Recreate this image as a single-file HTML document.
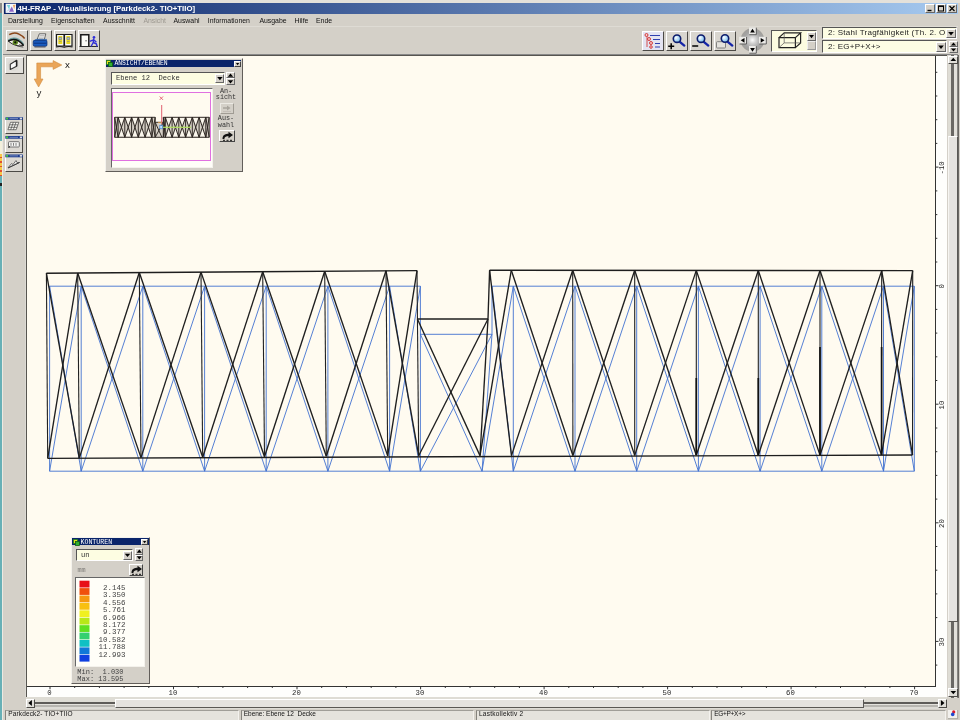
<!DOCTYPE html>
<html><head><meta charset="utf-8">
<style>
html,body{margin:0;padding:0;}
body{width:960px;height:720px;overflow:hidden;background:#d4d0c8;position:relative;font-family:"Liberation Sans",sans-serif;font-size:7px;color:#111;}
.a{position:absolute;}
.mono{font-family:"Liberation Mono",monospace;}
.raised{border:1px solid;border-color:#fff #555 #555 #fff;background:#d4d0c8;box-sizing:border-box;}
.sunken{border:1px solid;border-color:#666 #fff #fff #666;box-sizing:border-box;}
.bl{stroke:#4272d0;stroke-width:0.900;fill:none;}
.bk{stroke:#1e1e1e;stroke-width:1.350;fill:none;}
.bk2{stroke:#111;stroke-width:1.700;fill:none;}
.bkv{stroke:#222;stroke-width:1.100;fill:none;}
.blv{stroke:#4272d0;stroke-width:0.900;fill:none;}
.rl{stroke:#333;stroke-width:1;}
.rt{font-family:"Liberation Mono",monospace;font-size:7.3px;fill:#2a2a2a;}
.menu span{position:absolute;top:0;white-space:nowrap;}
.tb{position:absolute;box-sizing:border-box;border:1px solid;border-color:#fff #666 #666 #fff;background:#d4d0c8;}
.tb2{position:absolute;box-sizing:border-box;border-style:solid;border-width:1px 1.500px 1.500px 1px;border-color:#fff #4c4a46 #4c4a46 #fff;background:#d9d6cf;}
.st{position:absolute;top:709.500px;height:10.500px;box-sizing:border-box;border-style:solid;border-width:1.500px 1px 0 1px;border-color:#a09e98 #f4f2ee #e2e0da #85837d;background:#e5e3dd;font-size:6.5px;line-height:6.200px;padding-left:2px;white-space:nowrap;overflow:hidden;color:#111;}
</style></head><body><div id="wrap" style="position:absolute;left:0;top:0;width:960px;height:720px;will-change:transform">
<!-- desktop strip -->
<div class="a" style="left:0;top:0;width:2px;height:720px;background:#68b0b6"></div>
<div class="a" style="left:2px;top:0;width:1px;height:720px;background:#ece9e2"></div>
<div class="a" style="left:0;top:0;width:2px;height:13px;background:#8c8c8a"></div>
<div class="a" style="left:0;top:0;width:960px;height:2.500px;background:#e4e1da"></div>
<div class="a" style="left:0;top:141px;width:2px;height:13.300px;background:#f4f0dc"></div>
<div class="a" style="left:0;top:154.300px;width:2px;height:21.300px;background:repeating-linear-gradient(180deg,#f6c848 0,#f6c848 3px,#e05030 3px,#e05030 4.500px)"></div>
<div class="a" style="left:0;top:183px;width:2px;height:3px;background:#222"></div>
<!-- title bar -->
<div class="a" style="left:4px;top:2.500px;width:954px;height:11.200px;background:linear-gradient(90deg,#0a246a 0%,#a6caf0 100%)"></div>
<div id="ttl" class="a" style="left:17.500px;top:3px;height:11px;line-height:11px;font-weight:bold;color:#fff;font-size:7.8px;white-space:nowrap">4H-FRAP - Visualisierung [Parkdeck2- TIO+TIIO]</div>
<svg class="a" style="left:0;top:0" width="20" height="16"><rect x="5.600" y="3.700" width="10.400" height="9.200" fill="#f4f6fa"/><path d="M6.800 5L10 5L9.300 9.800Z" fill="#78d4dc"/><path d="M9 11.800L11.800 6.500L14 11.800Z" fill="#8c64c8"/><path d="M12.800 5L15.500 4.800L14.200 9.300Z" fill="#f0a868"/><path d="M7 11.500l3-3" stroke="#a0c8e8" stroke-width="1"/></svg>
<!-- window buttons -->
<div class="tb" style="left:925px;top:4px;width:10px;height:9px"></div>
<div class="tb" style="left:936px;top:4px;width:10px;height:9px"></div>
<div class="tb" style="left:947px;top:4px;width:10px;height:9px"></div>
<svg class="a" style="left:925px;top:4px" width="32" height="9"><path d="M2.5 6.5h4" stroke="#000" stroke-width="1.4"/><rect x="13.5" y="2" width="5" height="5" fill="none" stroke="#000" stroke-width="1"/><path d="M13 2.3h6" stroke="#000" stroke-width="1.2"/><path d="M24.5 2l5 5M29.5 2l-5 5" stroke="#000" stroke-width="1.2"/></svg>
<!-- menu -->
<div class="a menu" style="left:0;top:15px;width:960px;height:11px;line-height:11px;font-size:6.900px;color:#111">
<span style="left:7.900px">Darstellung</span><span style="left:51px">Eigenschaften</span><span style="left:103.100px">Ausschnitt</span><span style="left:143.400px;color:#9c9890">Ansicht</span><span style="left:173.500px">Auswahl</span><span style="left:207.800px">Informationen</span><span style="left:259.400px">Ausgabe</span><span style="left:294.600px">Hilfe</span><span style="left:316px">Ende</span>
</div>
<!-- canvas -->
<div class="a" style="left:24.500px;top:56px;width:1.500px;height:641px;background:#dcdad4"></div>
<div class="a" style="left:25.800px;top:54.800px;width:921.700px;height:642.200px;background:#fefefc;border-left:1.300px solid #575550;border-top:1.300px solid #575550;box-sizing:border-box"></div>
<div class="a" style="left:27px;top:56px;width:909px;height:630px;background:#fffbf0"></div>
<svg class="a" style="left:0;top:0" width="960" height="720">
<path d="M27 686.5H936M935.5 56V687" class="rl" fill="none"/>
<line x1="49.6" y1="286.2" x2="420.4" y2="286.2" class="bl"/>
<line x1="49.6" y1="471.2" x2="914.3" y2="471.2" class="bl"/>
<line x1="49.6" y1="286.2" x2="49.6" y2="471.2" class="blv"/>
<line x1="81.2" y1="286.2" x2="81.2" y2="471.2" class="blv"/>
<line x1="142.8" y1="286.2" x2="142.8" y2="471.2" class="blv"/>
<line x1="204.6" y1="286.2" x2="204.6" y2="471.2" class="blv"/>
<line x1="266.2" y1="286.2" x2="266.2" y2="471.2" class="blv"/>
<line x1="327.9" y1="286.2" x2="327.9" y2="471.2" class="blv"/>
<line x1="389.6" y1="286.2" x2="389.6" y2="471.2" class="blv"/>
<line x1="420.4" y1="286.2" x2="420.4" y2="471.2" class="blv"/>
<line x1="49.6" y1="286.2" x2="81.2" y2="471.2" class="bl"/>
<line x1="81.2" y1="286.2" x2="49.6" y2="471.2" class="bl"/>
<line x1="81.2" y1="286.2" x2="142.8" y2="471.2" class="bl"/>
<line x1="142.8" y1="286.2" x2="81.2" y2="471.2" class="bl"/>
<line x1="142.8" y1="286.2" x2="204.6" y2="471.2" class="bl"/>
<line x1="204.6" y1="286.2" x2="142.8" y2="471.2" class="bl"/>
<line x1="204.6" y1="286.2" x2="266.2" y2="471.2" class="bl"/>
<line x1="266.2" y1="286.2" x2="204.6" y2="471.2" class="bl"/>
<line x1="266.2" y1="286.2" x2="327.9" y2="471.2" class="bl"/>
<line x1="327.9" y1="286.2" x2="266.2" y2="471.2" class="bl"/>
<line x1="327.9" y1="286.2" x2="389.6" y2="471.2" class="bl"/>
<line x1="389.6" y1="286.2" x2="327.9" y2="471.2" class="bl"/>
<line x1="389.6" y1="286.2" x2="420.4" y2="471.2" class="bl"/>
<line x1="420.4" y1="286.2" x2="389.6" y2="471.2" class="bl"/>
<line x1="420.4" y1="334.3" x2="492.0" y2="334.3" class="bl"/>
<line x1="420.4" y1="334.3" x2="482.0" y2="471.2" class="bl"/>
<line x1="492.0" y1="334.3" x2="420.4" y2="471.2" class="bl"/>
<line x1="492.0" y1="334.3" x2="482.0" y2="471.2" class="bl"/>
<line x1="492.0" y1="286.2" x2="914.3" y2="286.2" class="bl"/>
<line x1="492.0" y1="286.2" x2="492.0" y2="334.3" class="bl"/>
<line x1="513.3" y1="286.2" x2="513.3" y2="471.2" class="blv"/>
<line x1="575.0" y1="286.2" x2="575.0" y2="471.2" class="blv"/>
<line x1="636.7" y1="286.2" x2="636.7" y2="471.2" class="blv"/>
<line x1="698.4" y1="286.2" x2="698.4" y2="471.2" class="blv"/>
<line x1="760.1" y1="286.2" x2="760.1" y2="471.2" class="blv"/>
<line x1="821.8" y1="286.2" x2="821.8" y2="471.2" class="blv"/>
<line x1="883.5" y1="286.2" x2="883.5" y2="471.2" class="blv"/>
<line x1="914.3" y1="286.2" x2="914.3" y2="471.2" class="blv"/>
<line x1="492.0" y1="286.2" x2="513.3" y2="471.2" class="bl"/>
<line x1="513.3" y1="286.2" x2="482.0" y2="471.2" class="bl"/>
<line x1="513.3" y1="286.2" x2="575.0" y2="471.2" class="bl"/>
<line x1="575.0" y1="286.2" x2="513.3" y2="471.2" class="bl"/>
<line x1="575.0" y1="286.2" x2="636.7" y2="471.2" class="bl"/>
<line x1="636.7" y1="286.2" x2="575.0" y2="471.2" class="bl"/>
<line x1="636.7" y1="286.2" x2="698.4" y2="471.2" class="bl"/>
<line x1="698.4" y1="286.2" x2="636.7" y2="471.2" class="bl"/>
<line x1="698.4" y1="286.2" x2="760.1" y2="471.2" class="bl"/>
<line x1="760.1" y1="286.2" x2="698.4" y2="471.2" class="bl"/>
<line x1="760.1" y1="286.2" x2="821.8" y2="471.2" class="bl"/>
<line x1="821.8" y1="286.2" x2="760.1" y2="471.2" class="bl"/>
<line x1="821.8" y1="286.2" x2="883.5" y2="471.2" class="bl"/>
<line x1="883.5" y1="286.2" x2="821.8" y2="471.2" class="bl"/>
<line x1="883.5" y1="286.2" x2="914.3" y2="471.2" class="bl"/>
<line x1="914.3" y1="286.2" x2="883.5" y2="471.2" class="bl"/>
<line x1="46.4" y1="273.2" x2="417.0" y2="270.6" class="bk"/>
<line x1="47.7" y1="458.3" x2="912.5" y2="455.0" class="bk"/>
<line x1="46.4" y1="273.2" x2="47.7" y2="458.3" class="bkv"/>
<line x1="77.7" y1="273.0" x2="79.3" y2="458.1" class="bkv"/>
<line x1="139.3" y1="272.5" x2="141.0" y2="457.6" class="bkv"/>
<line x1="201.0" y1="272.1" x2="202.7" y2="457.2" class="bkv"/>
<line x1="262.7" y1="271.7" x2="264.5" y2="456.8" class="bkv"/>
<line x1="324.7" y1="271.2" x2="326.3" y2="456.3" class="bkv"/>
<line x1="386.0" y1="270.8" x2="387.7" y2="455.9" class="bkv"/>
<line x1="417.0" y1="270.6" x2="418.7" y2="455.7" class="bkv"/>
<line x1="46.4" y1="273.2" x2="79.3" y2="458.1" class="bk"/>
<line x1="77.7" y1="273.0" x2="47.7" y2="458.3" class="bk"/>
<line x1="77.7" y1="273.0" x2="141.0" y2="457.6" class="bk"/>
<line x1="139.3" y1="272.5" x2="79.3" y2="458.1" class="bk"/>
<line x1="139.3" y1="272.5" x2="202.7" y2="457.2" class="bk"/>
<line x1="201.0" y1="272.1" x2="141.0" y2="457.6" class="bk"/>
<line x1="201.0" y1="272.1" x2="264.5" y2="456.8" class="bk"/>
<line x1="262.7" y1="271.7" x2="202.7" y2="457.2" class="bk"/>
<line x1="262.7" y1="271.7" x2="326.3" y2="456.3" class="bk"/>
<line x1="324.7" y1="271.2" x2="264.5" y2="456.8" class="bk"/>
<line x1="324.7" y1="271.2" x2="387.7" y2="455.9" class="bk"/>
<line x1="386.0" y1="270.8" x2="326.3" y2="456.3" class="bk"/>
<line x1="386.0" y1="270.8" x2="418.7" y2="455.7" class="bk"/>
<line x1="417.0" y1="270.6" x2="387.7" y2="455.9" class="bk"/>
<line x1="417.4" y1="319.0" x2="488.0" y2="319.0" class="bk"/>
<line x1="417.4" y1="319.0" x2="480.0" y2="455.6" class="bk"/>
<line x1="488.0" y1="319.0" x2="418.7" y2="455.7" class="bk"/>
<line x1="488.0" y1="319.0" x2="480.0" y2="455.6" class="bk"/>
<line x1="489.6" y1="270.2" x2="912.7" y2="270.6" class="bk"/>
<line x1="489.6" y1="270.2" x2="488.0" y2="319.0" class="bk"/>
<line x1="572.7" y1="270.3" x2="572.9" y2="455.5" class="bkv"/>
<line x1="634.7" y1="270.3" x2="634.7" y2="455.4" class="bkv"/>
<line x1="696.3" y1="270.4" x2="696.3" y2="455.3" class="bkv"/>
<line x1="758.3" y1="270.5" x2="758.3" y2="455.2" class="bkv"/>
<line x1="820.0" y1="270.5" x2="820.0" y2="455.1" class="bkv"/>
<line x1="881.7" y1="270.6" x2="881.5" y2="455.0" class="bkv"/>
<line x1="912.7" y1="270.6" x2="912.5" y2="455.0" class="bkv"/>
<line x1="489.6" y1="270.2" x2="511.5" y2="455.6" class="bk"/>
<line x1="511.3" y1="270.2" x2="480.0" y2="455.6" class="bk"/>
<line x1="511.3" y1="270.2" x2="572.9" y2="455.5" class="bk"/>
<line x1="572.7" y1="270.3" x2="511.5" y2="455.6" class="bk"/>
<line x1="572.7" y1="270.3" x2="634.7" y2="455.4" class="bk"/>
<line x1="634.7" y1="270.3" x2="572.9" y2="455.5" class="bk"/>
<line x1="634.7" y1="270.3" x2="696.3" y2="455.3" class="bk"/>
<line x1="696.3" y1="270.4" x2="634.7" y2="455.4" class="bk"/>
<line x1="696.3" y1="270.4" x2="758.3" y2="455.2" class="bk"/>
<line x1="758.3" y1="270.5" x2="696.3" y2="455.3" class="bk"/>
<line x1="758.3" y1="270.5" x2="820.0" y2="455.1" class="bk"/>
<line x1="820.0" y1="270.5" x2="758.3" y2="455.2" class="bk"/>
<line x1="820.0" y1="270.5" x2="881.5" y2="455.0" class="bk"/>
<line x1="881.7" y1="270.6" x2="820.0" y2="455.1" class="bk"/>
<line x1="881.7" y1="270.6" x2="912.5" y2="455.0" class="bk"/>
<line x1="912.7" y1="270.6" x2="881.5" y2="455.0" class="bk"/>
<line x1="820.0" y1="347.0" x2="820.0" y2="455.0" class="bk2"/>
<line x1="881.6" y1="347.0" x2="881.6" y2="455.0" class="bk2"/>
<line x1="696.3" y1="378.0" x2="696.3" y2="455.0" class="bk2"/>
<line x1="758.3" y1="378.0" x2="758.3" y2="455.0" class="bk2"/>
<line x1="50.0" y1="686.0" x2="50.0" y2="689.3" class="rl"/>
<line x1="74.7" y1="686.0" x2="74.7" y2="688.0" class="rl"/>
<line x1="99.4" y1="686.0" x2="99.4" y2="688.0" class="rl"/>
<line x1="124.1" y1="686.0" x2="124.1" y2="688.0" class="rl"/>
<line x1="148.8" y1="686.0" x2="148.8" y2="688.0" class="rl"/>
<line x1="173.5" y1="686.0" x2="173.5" y2="689.3" class="rl"/>
<line x1="198.2" y1="686.0" x2="198.2" y2="688.0" class="rl"/>
<line x1="222.9" y1="686.0" x2="222.9" y2="688.0" class="rl"/>
<line x1="247.6" y1="686.0" x2="247.6" y2="688.0" class="rl"/>
<line x1="272.3" y1="686.0" x2="272.3" y2="688.0" class="rl"/>
<line x1="297.0" y1="686.0" x2="297.0" y2="689.3" class="rl"/>
<line x1="321.7" y1="686.0" x2="321.7" y2="688.0" class="rl"/>
<line x1="346.4" y1="686.0" x2="346.4" y2="688.0" class="rl"/>
<line x1="371.2" y1="686.0" x2="371.2" y2="688.0" class="rl"/>
<line x1="395.9" y1="686.0" x2="395.9" y2="688.0" class="rl"/>
<line x1="420.6" y1="686.0" x2="420.6" y2="689.3" class="rl"/>
<line x1="445.3" y1="686.0" x2="445.3" y2="688.0" class="rl"/>
<line x1="470.0" y1="686.0" x2="470.0" y2="688.0" class="rl"/>
<line x1="494.7" y1="686.0" x2="494.7" y2="688.0" class="rl"/>
<line x1="519.4" y1="686.0" x2="519.4" y2="688.0" class="rl"/>
<line x1="544.1" y1="686.0" x2="544.1" y2="689.3" class="rl"/>
<line x1="568.8" y1="686.0" x2="568.8" y2="688.0" class="rl"/>
<line x1="593.5" y1="686.0" x2="593.5" y2="688.0" class="rl"/>
<line x1="618.2" y1="686.0" x2="618.2" y2="688.0" class="rl"/>
<line x1="642.9" y1="686.0" x2="642.9" y2="688.0" class="rl"/>
<line x1="667.6" y1="686.0" x2="667.6" y2="689.3" class="rl"/>
<line x1="692.3" y1="686.0" x2="692.3" y2="688.0" class="rl"/>
<line x1="717.0" y1="686.0" x2="717.0" y2="688.0" class="rl"/>
<line x1="741.7" y1="686.0" x2="741.7" y2="688.0" class="rl"/>
<line x1="766.4" y1="686.0" x2="766.4" y2="688.0" class="rl"/>
<line x1="791.1" y1="686.0" x2="791.1" y2="689.3" class="rl"/>
<line x1="815.8" y1="686.0" x2="815.8" y2="688.0" class="rl"/>
<line x1="840.5" y1="686.0" x2="840.5" y2="688.0" class="rl"/>
<line x1="865.2" y1="686.0" x2="865.2" y2="688.0" class="rl"/>
<line x1="889.9" y1="686.0" x2="889.9" y2="688.0" class="rl"/>
<line x1="914.6" y1="686.0" x2="914.6" y2="689.3" class="rl"/>
<line x1="935.5" y1="72.3" x2="937.3" y2="72.3" class="rl"/>
<line x1="935.5" y1="96.0" x2="937.3" y2="96.0" class="rl"/>
<line x1="935.5" y1="119.7" x2="937.3" y2="119.7" class="rl"/>
<line x1="935.5" y1="143.4" x2="937.3" y2="143.4" class="rl"/>
<line x1="935.5" y1="167.1" x2="938.5" y2="167.1" class="rl"/>
<line x1="935.5" y1="190.9" x2="937.3" y2="190.9" class="rl"/>
<line x1="935.5" y1="214.6" x2="937.3" y2="214.6" class="rl"/>
<line x1="935.5" y1="238.3" x2="937.3" y2="238.3" class="rl"/>
<line x1="935.5" y1="262.0" x2="937.3" y2="262.0" class="rl"/>
<line x1="935.5" y1="285.7" x2="938.5" y2="285.7" class="rl"/>
<line x1="935.5" y1="309.4" x2="937.3" y2="309.4" class="rl"/>
<line x1="935.5" y1="333.1" x2="937.3" y2="333.1" class="rl"/>
<line x1="935.5" y1="356.8" x2="937.3" y2="356.8" class="rl"/>
<line x1="935.5" y1="380.5" x2="937.3" y2="380.5" class="rl"/>
<line x1="935.5" y1="404.2" x2="938.5" y2="404.2" class="rl"/>
<line x1="935.5" y1="428.0" x2="937.3" y2="428.0" class="rl"/>
<line x1="935.5" y1="451.7" x2="937.3" y2="451.7" class="rl"/>
<line x1="935.5" y1="475.4" x2="937.3" y2="475.4" class="rl"/>
<line x1="935.5" y1="499.1" x2="937.3" y2="499.1" class="rl"/>
<line x1="935.5" y1="522.8" x2="938.5" y2="522.8" class="rl"/>
<line x1="935.5" y1="546.5" x2="937.3" y2="546.5" class="rl"/>
<line x1="935.5" y1="570.2" x2="937.3" y2="570.2" class="rl"/>
<line x1="935.5" y1="593.9" x2="937.3" y2="593.9" class="rl"/>
<line x1="935.5" y1="617.6" x2="937.3" y2="617.6" class="rl"/>
<line x1="935.5" y1="641.4" x2="938.5" y2="641.4" class="rl"/>
<line x1="935.5" y1="665.1" x2="937.3" y2="665.1" class="rl"/>
<text x="49.4" y="694.9" class="rt" text-anchor="middle">0</text><text x="172.9" y="694.9" class="rt" text-anchor="middle">10</text><text x="296.4" y="694.9" class="rt" text-anchor="middle">20</text><text x="420.0" y="694.9" class="rt" text-anchor="middle">30</text><text x="543.5" y="694.9" class="rt" text-anchor="middle">40</text><text x="667.0" y="694.9" class="rt" text-anchor="middle">50</text><text x="790.5" y="694.9" class="rt" text-anchor="middle">60</text><text x="914.0" y="694.9" class="rt" text-anchor="middle">70</text>
<text transform="translate(944.2,167.9) rotate(-90)" class="rt" text-anchor="middle">-10</text><text transform="translate(944.2,286.4) rotate(-90)" class="rt" text-anchor="middle">0</text><text transform="translate(944.2,405.0) rotate(-90)" class="rt" text-anchor="middle">10</text><text transform="translate(944.2,523.5) rotate(-90)" class="rt" text-anchor="middle">20</text><text transform="translate(944.2,642.1) rotate(-90)" class="rt" text-anchor="middle">30</text>
</svg>
<!-- toolbar separators -->
<div class="a" style="left:3px;top:26px;width:955px;height:1px;background:#dedbd4"></div>
<div class="a" style="left:3px;top:54px;width:955px;height:1px;background:#888"></div>
<!-- left toolbar buttons -->
<div class="tb2" style="left:5.500px;top:30px;width:22px;height:21px"></div>
<div class="tb2" style="left:29.500px;top:30px;width:22px;height:21px"></div>
<div class="tb2" style="left:53.500px;top:30px;width:22px;height:21px"></div>
<div class="tb2" style="left:77.500px;top:30px;width:22px;height:21px"></div>
<svg class="a" style="left:0;top:0" width="110" height="56">
 <!-- eye -->
 <path d="M9.200 34.600 Q14.500 31.500 19 34.200 Q22.500 36 24.600 38.400" stroke="#8a4618" stroke-width="1.500" fill="none"/>
 <path d="M8.300 40.500 Q13 36.800 18.500 39.500 Q21.500 41 23.500 44.500" stroke="#6a9c9c" stroke-width="1.600" fill="none"/>
 <path d="M8.300 41.200 Q13 38.200 18.500 40.800 Q21.500 42.500 23.500 45.500 Q16 47.500 8.300 41.200Z" fill="#f0eee6" stroke="#1a1a1a" stroke-width="0.900"/>
 <circle cx="15.300" cy="42.300" r="2.600" fill="#5c8420"/><circle cx="15.300" cy="42.300" r="1.100" fill="#0c1404"/>
 <path d="M8.300 41.200 Q13 38.200 18.500 40.800 Q21.500 42.500 23.500 45.500" stroke="#111" stroke-width="1.500" fill="none"/>
 <path d="M17 45.800 Q20.500 46.800 23.300 47.200M19 44.600L22.500 46" stroke="#333" stroke-width="0.700" fill="none"/>
 <!-- printer -->
 <path d="M37 39.800 L39.300 33.800 L45.800 33.800 L44.200 39.800Z" fill="#f4f4f4" stroke="#333" stroke-width="0.700"/>
 <path d="M39.500 35.500h5M39 37h5M38.500 38.400h5" stroke="#888" stroke-width="0.500"/>
 <path d="M33.300 41 L36 39.300 L46.500 39.300 L46.800 41Z" fill="#4a8ae0" stroke="#123c80" stroke-width="0.500"/>
 <rect x="33.200" y="40.600" width="13.800" height="5.600" rx="1.300" fill="#1a5cc0" stroke="#0c2c70" stroke-width="0.700"/>
 <path d="M33.800 43.200h12.600" stroke="#0c2c78" stroke-width="0.900"/>
 <path d="M34.500 47h11" stroke="#334" stroke-width="0.800"/>
 <!-- book -->
 <path d="M56.500 34.500h7.500v11.500h-7.500zM64.500 34.500h7.500v11.500h-7.500z" fill="#fbfbf4" stroke="#1a1a1a" stroke-width="1.200"/>
 <rect x="58.300" y="36" width="4" height="8" fill="#e8d820"/><rect x="66.300" y="36" width="4" height="8" fill="#e8d820"/>
 <path d="M59 37.500h2.500v2h-2.500zM67 37.500h2.500v2h-2.500zM59 41.500h2.500M67 41.500h2.500" fill="#a8b8d0" stroke="#6878a0" stroke-width="0.500"/>
 <path d="M56 47 Q60 46 64.200 47.300 Q68.500 46 72.500 47" stroke="#1a1a1a" stroke-width="1.100" fill="none"/>
 <!-- exit -->
 <path d="M80.800 46.300V34.800H88.800V46.300" fill="#fbfbf6" stroke="#1a1a1a" stroke-width="1.500"/>
 <path d="M79.500 46.500H98" stroke="#1a1a1a" stroke-width="0.900"/>
 <path d="M85.300 40.800h1.500" stroke="#333" stroke-width="0.800"/>
 <circle cx="94" cy="37.300" r="1.300" fill="#3030d8"/>
 <path d="M93.800 38.800L93.200 42.500M93.600 39.800L90.300 41.200M93.600 39.800L96 41.800M93.200 42.500L91.300 46M93.200 42.500L96.300 43.800L97 46" stroke="#3030d8" stroke-width="1.400" fill="none" stroke-linecap="round"/>
</svg>
<!-- right toolbar -->
<div class="tb2" style="left:642px;top:30.500px;width:21.500px;height:20.500px;background:#e4e4f2"></div>
<div class="tb2" style="left:666px;top:30.500px;width:21.500px;height:20.500px"></div>
<div class="tb2" style="left:690px;top:30.500px;width:21.500px;height:20.500px"></div>
<div class="tb2" style="left:714px;top:30.500px;width:21.500px;height:20.500px"></div>
<svg class="a" style="left:642px;top:30px" width="96" height="21">
 <!-- list icon -->
 <path d="M5 4 V17" stroke="#d04040" stroke-width="0.9"/>
 <g fill="#f8d0d0" stroke="#d03030" stroke-width="0.9"><circle cx="4.5" cy="5" r="1.5"/><circle cx="7" cy="9" r="1.5"/><circle cx="9" cy="13" r="1.5"/><circle cx="9" cy="17" r="1.3"/></g>
 <g stroke="#3040b0" stroke-width="1"><path d="M8 5.5h10M11 9.5h7M13 13.5h5M13 17h5"/></g>
 <!-- zoom + -->
 <defs><radialGradient id="lg" cx="0.35" cy="0.35" r="0.7"><stop offset="0" stop-color="#fff"/><stop offset="0.5" stop-color="#b4dcf8"/><stop offset="1" stop-color="#78b8e8"/></radialGradient></defs>
 <g><path d="M37.500 11.700 L42.300 15.600" stroke="#1424a8" stroke-width="2.300" stroke-linecap="round"/><circle cx="35" cy="8.700" r="3.700" fill="url(#lg)" stroke="#0c1c6c" stroke-width="1.600"/></g>
 <path d="M26.200 16.200h6M29.200 13.200v6" stroke="#000" stroke-width="1.500"/>
 <!-- zoom - -->
 <g transform="translate(24,0)"><path d="M37.500 11.700 L42.300 15.600" stroke="#1424a8" stroke-width="2.300" stroke-linecap="round"/><circle cx="35" cy="8.700" r="3.700" fill="url(#lg)" stroke="#0c1c6c" stroke-width="1.600"/><path d="M26.200 16h6" stroke="#000" stroke-width="1.500"/></g>
 <!-- zoom box -->
 <g transform="translate(48,0)"><rect x="26.500" y="11.700" width="9" height="6.300" rx="0.800" fill="#e4e2dc" stroke="#777" stroke-width="0.900"/><path d="M37.500 11.700 L42.300 15.600" stroke="#1424a8" stroke-width="2.300" stroke-linecap="round"/><circle cx="35" cy="8.500" r="3.700" fill="url(#lg)" stroke="#0c1c6c" stroke-width="1.600"/></g>
</svg>
<!-- nav pad -->
<svg class="a" style="left:737.250px;top:25.250px" width="32" height="30">
 <defs><radialGradient id="rg"><stop offset="0" stop-color="#fcfcfc"/><stop offset="0.300" stop-color="#d0d0d0"/><stop offset="0.700" stop-color="#a4a4a4"/><stop offset="1" stop-color="#a09e9a"/></radialGradient></defs>
 <circle cx="15.500" cy="15" r="11.800" fill="url(#rg)"/>
 <g fill="#ecebe8"><rect x="12" y="2.500" width="7" height="7"/><rect x="12" y="21" width="7" height="7"/><rect x="2.200" y="11.800" width="7" height="7"/><rect x="22" y="11.800" width="7" height="7"/></g>
 <g fill="none" stroke="#555" stroke-width="0.900"><path d="M12.300 9.700h7v-7M12.300 28.200h7v-7M2.500 19h7v-7M22.300 19h7v-7"/></g>
 <path d="M15.500 3.800l2.400 3.800h-4.800zM15.500 26.700l2.400-3.800h-4.800zM3.700 15.300l3.800-2.400v4.800zM27.500 15.300l-3.800-2.400v4.800z" fill="#000"/>
</svg>
<!-- 3d box combo -->
<div class="a sunken" style="left:771px;top:30px;width:46px;height:22px;background:#fcfce0;border-color:#555 #fff #fff #555"></div>
<svg class="a" style="left:0;top:0" width="820" height="56"><g fill="none" stroke="#222" stroke-width="1.200"><path d="M779 37.600h16.400v10h-16.400z"/><path d="M779 37.600l5.200-4.700h16.400l-5.200 4.700M795.400 47.600l5.200-4.700v-10"/></g><path d="M779 47.600l5.200-4.700h16.400M784.200 32.900v10" stroke="#555" stroke-width="0.700" fill="none"/></svg>
<div class="tb" style="left:807px;top:32px;width:9px;height:9px"></div>
<div class="a" style="left:807px;top:41px;width:9px;height:9px;background:#d4d0c8;border:1px solid;border-color:#eee #999 #999 #eee;box-sizing:border-box"></div>
<svg class="a" style="left:807px;top:32px" width="9" height="9"><path d="M2 3h5l-2.5 3.2z" fill="#000"/></svg>
<!-- combos right -->
<div class="a sunken" style="left:822px;top:27px;width:135px;height:12px;background:#fdfde4;border-color:#555 #fff #fff #555"></div>
<div class="a" style="left:828px;top:28px;height:10px;line-height:10px;font-size:8px;letter-spacing:0.27px;white-space:nowrap;color:#222">2: Stahl Tragfähigkeit (Th. 2. O</div>
<div class="tb" style="left:946px;top:29px;width:10px;height:9px"></div>
<svg class="a" style="left:946px;top:29px" width="10" height="9"><path d="M2.2 3h5.6l-2.8 3.4z" fill="#000"/></svg>
<div class="a sunken" style="left:822px;top:40px;width:125px;height:13px;background:#fdfde4;border-color:#555 #fff #fff #555"></div>
<div class="a" style="left:828px;top:42px;height:10px;line-height:10px;font-size:8px;letter-spacing:0.27px;white-space:nowrap;color:#222">2: EG+P+X+&gt;</div>
<div class="tb" style="left:936px;top:42px;width:10px;height:10px"></div>
<svg class="a" style="left:936px;top:42px" width="10" height="10"><path d="M2.2 3.5h5.6l-2.8 3.4z" fill="#000"/></svg>
<div class="tb" style="left:949px;top:41px;width:9px;height:6px"></div>
<div class="tb" style="left:949px;top:47px;width:9px;height:6px"></div>
<svg class="a" style="left:949px;top:41px" width="9" height="12"><path d="M4.5 1.5l2.6 3h-5.2zM4.5 10.5l2.6-3h-5.2z" fill="#000"/></svg>
<!-- left side panel buttons -->
<div class="tb2" style="left:5.200px;top:56.800px;width:18.500px;height:17.700px;background:#e2e0db"></div>
<svg class="a" style="left:0;top:50px" width="30" height="30"><circle cx="13.500" cy="15" r="6" fill="#dcdad6"/><path d="M10.300 14.200L16.600 10.300V16.300L10.300 19.400Z" fill="#fafafa" stroke="#333" stroke-width="1.100" stroke-linejoin="round"/><path d="M16.600 10.300V16.300" stroke="#222" stroke-width="1.500"/></svg>
<div class="tb2" style="left:5.300px;top:117.200px;width:17.800px;height:16.800px;background:#dcd9d3"></div>
<div class="tb2" style="left:5.300px;top:136px;width:17.800px;height:16.600px;background:#dcd9d3"></div>
<div class="tb2" style="left:5.300px;top:154.500px;width:17.800px;height:17px;background:#dcd9d3"></div>
<svg class="a" style="left:0;top:110px" width="30" height="66">
 <g fill="#1c3c90"><rect x="5.300" y="7.200" width="17.500" height="2.700"/><rect x="5.300" y="26" width="17.500" height="2.700"/><rect x="5.300" y="44.500" width="17.500" height="2.800"/></g>
 <g fill="#48c840"><rect x="6" y="7.600" width="2.200" height="1.900"/><rect x="6" y="26.400" width="2.200" height="1.900"/><rect x="6" y="44.900" width="2.200" height="1.900"/></g>
 <g fill="#dcdce0"><rect x="19.800" y="7.700" width="2.200" height="1.700"/><rect x="19.800" y="26.500" width="2.200" height="1.700"/><rect x="19.800" y="45" width="2.200" height="1.700"/></g>
 <g fill="#6c80b8"><rect x="9.500" y="8" width="8.500" height="1.100"/><rect x="9.500" y="26.800" width="8.500" height="1.100"/><rect x="9.500" y="45.300" width="8.500" height="1.100"/></g>
 <g fill="#f8f8f4" stroke="#444" stroke-width="0.700"><path d="M10.500 12.300h8.300l-2.600 7.400H7.900z"/></g>
 <path d="M13.300 12.300l-2.600 7.400M16 12.300l-2.600 7.400M9.600 14.800h8.300M8.700 17.300h8.300" stroke="#444" stroke-width="0.700" fill="none"/>
 <rect x="8.500" y="31.700" width="10.800" height="5.300" rx="0.800" fill="#f4f4f2" stroke="#666" stroke-width="0.900"/><path d="M11 33v2.800M13.500 33v2.800M16 33v2.800" stroke="#777" stroke-width="0.900"/><path d="M8.300 37.500l1.500-1" stroke="#222" stroke-width="1.100"/>
 <path d="M8 57.800L11.500 53.500L13 54.500L16 50.500L17 52.500L19.500 52.500L8 57.800Z" fill="#ececea" stroke="#555" stroke-width="0.800" stroke-linejoin="round"/><path d="M8 58l11.500-5.500" stroke="#333" stroke-width="0.900"/>
</svg>
<!-- axes icon -->
<svg class="a" style="left:0;top:0" width="100" height="110">
 <path d="M36.800 63H53.100V60.600L61.800 65L53.100 69.400V66.800H40.600V79H43L38.600 87L34.200 79H36.800Z" fill="#eaa558" stroke="#d08c40" stroke-width="0.600"/>
</svg>
<div class="a mono" style="left:64.800px;top:62.200px;font-size:9px;line-height:9px;color:#111">x</div>
<div class="a mono" style="left:36.300px;top:89.600px;font-size:9px;line-height:9px;color:#111">y</div>

<div class="a" style="left:104.500px;top:58.400px;width:138.500px;height:113.200px;background:#d4d0c8;border-style:solid;border-width:1px 1.500px 1.500px 1px;border-color:#f4f2ec #625e5a #625e5a #f4f2ec;box-sizing:border-box"></div>
<div class="a" style="left:105.500px;top:59.500px;width:135.800px;height:7.200px;background:#0a246a"></div>
<svg class="a" style="left:106px;top:60px" width="8" height="7"><rect x="0.5" y="0.5" width="4" height="4" fill="#e8e020" stroke="#208020" stroke-width="0.8"/><rect x="2.500" y="2.500" width="4" height="4" fill="#30b030" stroke="#106010" stroke-width="0.8"/></svg>
<div class="a mono" style="left:114.500px;top:60px;height:7px;line-height:7.500px;font-size:6.400px;color:#fff;white-space:nowrap;letter-spacing:-0.050px">ANSICHT/EBENEN</div>
<div class="a" style="left:234px;top:60.500px;width:7px;height:6px;background:#d4d0c8;border:1px solid;border-color:#fff #444 #444 #fff;box-sizing:border-box"></div>
<svg class="a" style="left:234px;top:60.500px" width="7" height="6"><path d="M2 2h3.200l-1.600 2.200z" fill="#000"/></svg>
<div class="a sunken" style="left:111px;top:72px;width:113.500px;height:12.500px;background:#fdfde2;border-color:#555 #fff #fff #555"></div>
<div class="a mono" style="left:116px;top:73px;height:10px;line-height:10px;font-size:7.100px;color:#333;white-space:pre">Ebene 12  Decke</div>
<div class="tb" style="left:214.500px;top:74px;width:9.500px;height:9px"></div>
<svg class="a" style="left:214.500px;top:74px" width="10" height="9"><path d="M2.200 3h5.400l-2.700 3.300z" fill="#000"/></svg>
<div class="tb" style="left:226px;top:71.500px;width:9px;height:6.500px"></div>
<div class="tb" style="left:226px;top:78px;width:9px;height:6.500px"></div>
<svg class="a" style="left:226px;top:71.500px" width="9" height="13"><path d="M4.500 1.500l2.700 3.200h-5.400zM4.500 11.500l2.700-3.200h-5.400z" fill="#000"/></svg>
<div class="a sunken" style="left:111px;top:88px;width:101.500px;height:80px;background:#fffef8;border-color:#666 #f4f2ec #f4f2ec #666"></div>
<div class="a" style="left:112px;top:92px;width:99px;height:69px;background:#fffbf0;border:1px solid #e070e0;box-sizing:border-box"></div>
<svg class="a" style="left:0;top:0" width="250" height="175"><rect x="114.7" y="117.3" width="94.5" height="20.0" fill="#d6d0c6"/><path d="M118.9 136.5L121.5 129.8L124.0 136.5ZM118.9 118.1L121.5 124.8L124.0 118.1ZM125.6 136.5L128.2 129.8L130.8 136.5ZM125.6 118.1L128.2 124.8L130.8 118.1ZM132.3 136.5L134.9 129.8L137.5 136.5ZM132.3 118.1L134.9 124.8L137.5 118.1ZM139.1 136.5L141.7 129.8L144.3 136.5ZM139.1 118.1L141.7 124.8L144.3 118.1ZM145.8 136.5L148.4 129.8L151.0 136.5ZM145.8 118.1L148.4 124.8L151.0 118.1ZM166.1 136.5L168.7 129.8L171.3 136.5ZM166.1 118.1L168.7 124.8L171.3 118.1ZM172.8 136.5L175.4 129.8L178.0 136.5ZM172.8 118.1L175.4 124.8L178.0 118.1ZM179.6 136.5L182.2 129.8L184.8 136.5ZM179.6 118.1L182.2 124.8L184.8 118.1ZM186.3 136.5L188.9 129.8L191.5 136.5ZM186.3 118.1L188.9 124.8L191.5 118.1ZM193.1 136.5L195.7 129.8L198.3 136.5ZM193.1 118.1L195.7 124.8L198.3 118.1ZM199.8 136.5L202.4 129.8L205.0 136.5ZM199.8 118.1L202.4 124.8L205.0 118.1Z" fill="#faf6ec"/><rect x="155.2" y="116.3" width="8.1" height="6" fill="#fffbf0"/><path d="M114.7 117.3H155.2V137.3H114.7ZM114.7 117.3L118.1 137.3M118.1 117.3L114.7 137.3M118.1 117.3L124.8 137.3M124.8 117.3L118.1 137.3M124.8 117.3L131.6 137.3M131.6 117.3L124.8 137.3M131.6 117.3L138.3 137.3M138.3 117.3L131.6 137.3M138.3 117.3L145.1 137.3M145.1 117.3L138.3 137.3M145.1 117.3L151.8 137.3M151.8 117.3L145.1 137.3M151.8 117.3L155.2 137.3M155.2 117.3L151.8 137.3M118.1 117.3V137.3M124.8 117.3V137.3M131.6 117.3V137.3M138.3 117.3V137.3M145.1 117.3V137.3M151.8 117.3V137.3M163.3 117.3H209.2V137.3H163.3ZM163.3 117.3L165.3 137.3M165.3 117.3L163.3 137.3M165.3 117.3L172.1 137.3M172.1 117.3L165.3 137.3M172.1 117.3L178.8 137.3M178.8 117.3L172.1 137.3M178.8 117.3L185.6 137.3M185.6 117.3L178.8 137.3M185.6 117.3L192.3 137.3M192.3 117.3L185.6 137.3M192.3 117.3L199.1 137.3M199.1 117.3L192.3 137.3M199.1 117.3L205.8 137.3M205.8 117.3L199.1 137.3M205.8 117.3L209.2 137.3M209.2 117.3L205.8 137.3M165.3 117.3V137.3M172.1 117.3V137.3M178.8 117.3V137.3M185.6 117.3V137.3M192.3 117.3V137.3M199.1 117.3V137.3M205.8 117.3V137.3M155.2 122.3H163.3M155.2 137.3H163.3M155.2 122.3L161.9 137.3M163.3 122.3L155.2 137.3" fill="none" stroke="#2a2420" stroke-width="0.950"/><path d="M161.700 105V124" stroke="#e06070" stroke-width="1"/><path d="M159.700 96.500l3.300 3.400M163 96.500l-3.300 3.400" stroke="#e05868" stroke-width="0.900" fill="none"/><path d="M162.500 127.300H191" stroke="#b0e060" stroke-width="1.200"/><rect x="159.800" y="125.300" width="2.600" height="3.500" fill="#c0e0f8" stroke="#4080d0" stroke-width="0.700"/><path d="M158 122.500h4" stroke="#e0a050" stroke-width="0.800"/></svg>
<div class="a mono" style="left:213.0px;top:86.5px;width:26px;height:8px;line-height:8px;font-size:6.800px;text-align:center;color:#333;white-space:pre">An-</div>
<div class="a mono" style="left:213.0px;top:93.2px;width:26px;height:8px;line-height:8px;font-size:6.800px;text-align:center;color:#333;white-space:pre">sicht</div>
<div class="a mono" style="left:213.0px;top:114.2px;width:26px;height:8px;line-height:8px;font-size:6.800px;text-align:center;color:#333;white-space:pre">Aus-</div>
<div class="a mono" style="left:213.0px;top:120.8px;width:26px;height:8px;line-height:8px;font-size:6.800px;text-align:center;color:#333;white-space:pre">wahl</div>
<div class="a" style="left:220px;top:103px;width:13.500px;height:10.500px;border:1px solid;border-color:#eceae4 #a09c94 #a09c94 #eceae4;box-sizing:border-box"></div>
<svg class="a" style="left:220px;top:103px" width="14" height="11"><path d="M3 4.300h4v-1.800l3.500 2.500-3.500 2.500v-1.800h-4z" fill="#a8a49c"/><path d="M3.500 8.500h7" stroke="#a8a49c" stroke-width="0.800" stroke-dasharray="1 1"/></svg>
<div class="tb" style="left:219px;top:129.500px;width:15.500px;height:12.500px;border-color:#fff #444 #444 #fff"></div>
<svg class="a" style="left:219.500px;top:129.500px" width="15" height="12"><path d="M2.500 9 C2.500 4.500 6 3.800 8.500 3.800 V1.800 L13 5 L8.500 8.200 V6.200 C6.500 6.200 4.500 6.500 4.300 9Z" fill="#111"/><path d="M3 10.300h2M6.500 10.300h2M10 10.300h2" stroke="#111" stroke-width="1"/></svg>
<div class="a" style="left:71px;top:537px;width:79px;height:147px;background:#d4d0c8;border-style:solid;border-width:1px 1.500px 1.500px 1px;border-color:#f4f2ec #625e5a #625e5a #f4f2ec;box-sizing:border-box"></div>
<div class="a" style="left:72px;top:538.300px;width:76.500px;height:7px;background:#0a246a"></div>
<svg class="a" style="left:72.500px;top:538.500px" width="8" height="7"><rect x="0.500" y="0.500" width="4" height="4" fill="#e8e020" stroke="#208020" stroke-width="0.800"/><rect x="2.500" y="2.500" width="4" height="4" fill="#30b030" stroke="#106010" stroke-width="0.800"/></svg>
<div class="a mono" style="left:80.500px;top:538.500px;height:7px;line-height:7.500px;font-size:6.600px;color:#fff;white-space:nowrap">KONTUREN</div>
<div class="a" style="left:141px;top:539px;width:7px;height:6px;background:#d4d0c8;border:1px solid;border-color:#fff #444 #444 #fff;box-sizing:border-box"></div>
<svg class="a" style="left:141px;top:539px" width="7" height="6"><path d="M2 2h3.200l-1.600 2.200z" fill="#000"/></svg>
<div class="a sunken" style="left:76px;top:549px;width:56.500px;height:11.500px;background:#fdfde2;border-color:#555 #fff #fff #555"></div>
<div class="a mono" style="left:81px;top:549.500px;height:10px;line-height:10px;font-size:7.100px;color:#333">un</div>
<div class="tb" style="left:122.500px;top:551px;width:9px;height:8.500px"></div>
<svg class="a" style="left:122.500px;top:551px" width="9" height="9"><path d="M1.800 2.800h5.400l-2.700 3.300z" fill="#000"/></svg>
<div class="tb" style="left:134.500px;top:548px;width:8.500px;height:6.500px"></div>
<div class="tb" style="left:134.500px;top:554.500px;width:8.500px;height:6.500px"></div>
<svg class="a" style="left:134.500px;top:548px" width="9" height="13"><path d="M4.300 1.500l2.600 3.200h-5.200zM4.300 11.500l2.600-3.200h-5.200z" fill="#000"/></svg>
<div class="a mono" style="left:77.500px;top:565.500px;height:8px;line-height:8px;font-size:6.800px;color:#7c7a76">mm</div>
<div class="tb" style="left:128.500px;top:563.500px;width:14.500px;height:12.500px;border-color:#fff #444 #444 #fff"></div>
<svg class="a" style="left:128.500px;top:563.500px" width="15" height="12"><path d="M2.500 9 C2.500 4.500 6 3.800 8.500 3.800 V1.800 L13 5 L8.500 8.200 V6.200 C6.500 6.200 4.500 6.500 4.300 9Z" fill="#111"/><path d="M3 10.300h2M6.500 10.300h2M10 10.300h2" stroke="#111" stroke-width="1"/></svg>
<div class="a sunken" style="left:75px;top:577px;width:69.500px;height:89.500px;background:#fffef8;border-color:#666 #f4f2ec #f4f2ec #666"></div>
<svg class="a" style="left:0;top:0" width="160" height="690"><style>.lt{font-family:"Liberation Mono",monospace;font-size:7px;fill:#444;}</style><rect x="79.500" y="580.70" width="10" height="6.800" fill="#e81018"/><rect x="79.500" y="588.11" width="10" height="6.800" fill="#f0500c"/><rect x="79.500" y="595.52" width="10" height="6.800" fill="#f59810"/><rect x="79.500" y="602.93" width="10" height="6.800" fill="#f8c010"/><rect x="79.500" y="610.34" width="10" height="6.800" fill="#f0f020"/><rect x="79.500" y="617.75" width="10" height="6.800" fill="#b8e818"/><rect x="79.500" y="625.16" width="10" height="6.800" fill="#60e020"/><rect x="79.500" y="632.57" width="10" height="6.800" fill="#34d070"/><rect x="79.500" y="639.98" width="10" height="6.800" fill="#10c0c4"/><rect x="79.500" y="647.39" width="10" height="6.800" fill="#1078d8"/><rect x="79.500" y="654.80" width="10" height="6.800" fill="#1040e0"/><text x="125.600" y="589.90" text-anchor="end" class="lt" style="font-size:7.500px">2.145</text><text x="125.600" y="597.33" text-anchor="end" class="lt" style="font-size:7.500px">3.350</text><text x="125.600" y="604.76" text-anchor="end" class="lt" style="font-size:7.500px">4.556</text><text x="125.600" y="612.19" text-anchor="end" class="lt" style="font-size:7.500px">5.761</text><text x="125.600" y="619.62" text-anchor="end" class="lt" style="font-size:7.500px">6.966</text><text x="125.600" y="627.05" text-anchor="end" class="lt" style="font-size:7.500px">8.172</text><text x="125.600" y="634.48" text-anchor="end" class="lt" style="font-size:7.500px">9.377</text><text x="125.600" y="641.91" text-anchor="end" class="lt" style="font-size:7.500px">10.582</text><text x="125.600" y="649.34" text-anchor="end" class="lt" style="font-size:7.500px">11.788</text><text x="125.600" y="656.77" text-anchor="end" class="lt" style="font-size:7.500px">12.993</text><text x="77.300" y="673.500" class="lt" xml:space="preserve">Min:  1.030</text><text x="77.300" y="680.800" class="lt" xml:space="preserve">Max: 13.595</text></svg>
<!-- vertical scrollbar -->
<div class="a" style="left:947.500px;top:55px;width:11px;height:643px;background:linear-gradient(90deg,#dedcd4 0,#dedcd4 3px,#6a6864 3.400px,#6a6864 6px,#e2e0da 6.500px,#e2e0da 9.200px,#6a6864 9.600px,#6a6864 10.600px,#d4d0c8 11px)"></div>
<div class="tb2" style="left:948px;top:55.500px;width:9.800px;height:8.800px;background:#e0ded8"></div>
<div class="tb2" style="left:948px;top:688.200px;width:9.800px;height:8.500px;background:#e0ded8"></div>
<svg class="a" style="left:947.500px;top:55px" width="11" height="9"><path d="M5.300 2.700l2.800 3.400h-5.600z" fill="#000"/></svg>
<svg class="a" style="left:947.500px;top:688px" width="11" height="9"><path d="M5.300 6.300l2.800-3.400h-5.600z" fill="#000"/></svg>
<div class="a" style="left:947.500px;top:135.500px;width:10.700px;height:486.500px;background:#e5e3df;border-left:1px solid #f6f5f2;border-top:1px solid #fff;border-right:1.300px solid #5a5854;border-bottom:1.300px solid #5a5854;box-sizing:border-box"></div>
<!-- horizontal scrollbar -->
<div class="a" style="left:26px;top:697px;width:921px;height:11.500px;background:linear-gradient(180deg,#dedcd4 0,#dedcd4 4.800px,#5e5c58 5.200px,#5e5c58 6.700px,#e4e2dc 7.100px,#e4e2dc 8px,#b8b6b0 8.300px,#b8b6b0 9.700px,#dedcd6 10px,#dedcd6 11.500px)"></div>
<div class="tb2" style="left:26px;top:698.500px;width:8.500px;height:9px;background:#e0ded8"></div>
<div class="tb2" style="left:937.500px;top:698.500px;width:9.200px;height:9px;background:#e0ded8"></div>
<svg class="a" style="left:26px;top:698px" width="9" height="10"><path d="M2.300 5l3.600-3v6z" fill="#000"/></svg>
<svg class="a" style="left:937px;top:698px" width="10" height="10"><path d="M7.500 5l-3.600-3v6z" fill="#000"/></svg>
<div class="a" style="left:115px;top:698.500px;width:749px;height:9.500px;background:#e5e3df;border-left:1px solid #fff;border-top:1px solid #fff;border-right:1.300px solid #5a5854;border-bottom:1.300px solid #5a5854;box-sizing:border-box"></div>
<!-- corner icon -->
<svg class="a" style="left:947px;top:709px" width="12" height="11"><rect x="1" y="1" width="9.500" height="8.500" fill="#f2f0ec"/><path d="M1 9.700h9.700V1" stroke="#9a9890" stroke-width="0.800" fill="none"/><circle cx="6.700" cy="2.900" r="1.600" fill="#e01828"/><circle cx="5.700" cy="5.400" r="1.800" fill="#2048d0"/></svg>

<!-- status bar -->
<div class="st" style="left:5.300px;width:233.500px;letter-spacing:0.130px">Parkdeck2- TIO+TIIO</div>
<div class="st" style="left:240.700px;width:233.500px">Ebene: Ebene 12&nbsp; Decke</div>
<div class="st" style="left:476px;width:233.500px;letter-spacing:0.240px">Lastkollektiv 2</div>
<div class="st" style="left:711.300px;width:235px;letter-spacing:-0.300px">EG+P+X+&gt;</div>
</div></body></html>
